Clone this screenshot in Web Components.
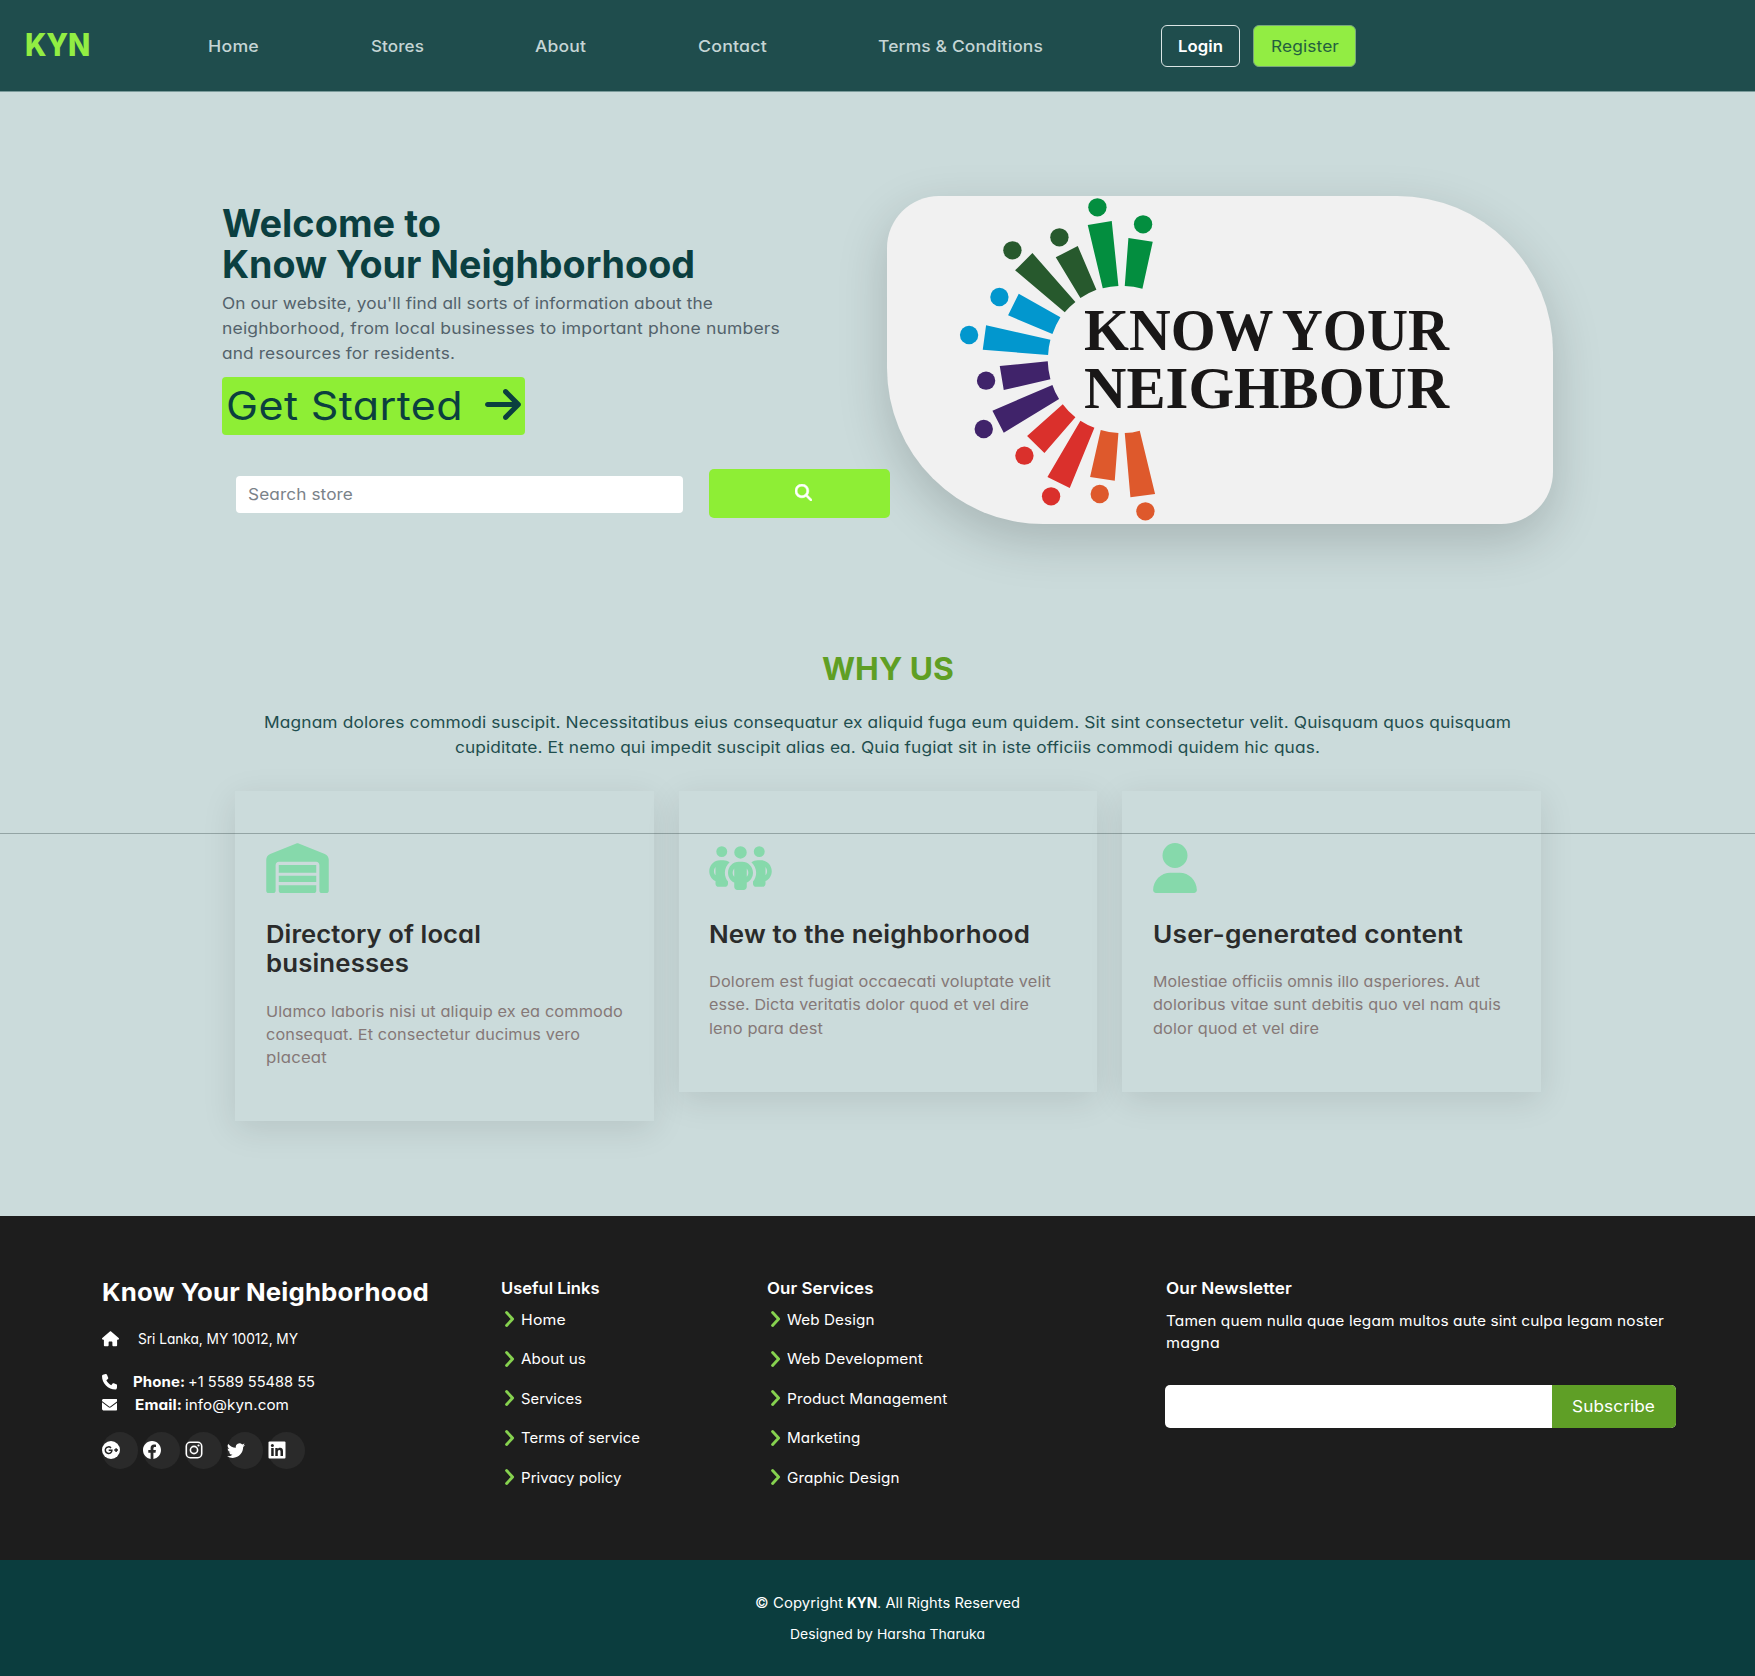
<!DOCTYPE html>
<html lang="en">
<head>
<meta charset="utf-8">
<title>Know Your Neighborhood</title>
<style>
  body { margin: 0; background: #cbdbdb; font-family: Inter, "Open Sans", sans-serif; font-feature-settings: "cv11"; }
</style>
</head>
<body>
<kyn-page></kyn-page>
<script>
const define = (name, html, init) => {
  const tpl = document.createElement('template');
  tpl.innerHTML = html;
  customElements.define(name, class extends HTMLElement {
    connectedCallback() {
      if (this.shadowRoot) return;
      this.attachShadow({ mode: 'open' }).append(document.importNode(tpl.content, true));
      if (init) init.call(this, this.shadowRoot);
    }
  });
};

define('text-line', `<style>
  :host { display: block; white-space: nowrap; flex: none; }
  span { display: inline-block; transform-origin: 0 50%; }
</style><span><slot></slot></span>`, function (root) {
  const w = parseFloat(this.getAttribute('w'));
  const span = root.querySelector('span');
  if (!w) return;
  const natural = span.getBoundingClientRect().width;
  const tracked = natural + (w - natural) * 0.15;
  span.style.letterSpacing = ((tracked - natural) / this.textContent.length).toFixed(4) + 'px';
  span.style.transform = 'scaleX(' + (w / tracked).toFixed(5) + ')';
  this.style.width = w + 'px';
});

const ICONS = {
  warehouse: ['0 0 640 512', '<path d="M0 488V171.3c0-26.2 15.9-49.7 40.2-59.4L308.1 4.8c7.6-3.1 16.1-3.1 23.8 0L599.8 111.9c24.3 9.7 40.2 33.3 40.2 59.4V488c0 13.3-10.7 24-24 24H568c-13.3 0-24-10.7-24-24V224c0-17.7-14.3-32-32-32H128c-17.7 0-32 14.3-32 32V488c0 13.3-10.7 24-24 24H24c-13.3 0-24-10.7-24-24zm488 24l-336 0c-13.3 0-24-10.7-24-24V432H512l0 56c0 13.3-10.7 24-24 24zM128 400V336H512v64H128zm0-96V224H512l0 80H128z"/>'],
  people: ['0 0 640 512', '<path d="M72 88a56 56 0 1 1 112 0A56 56 0 1 1 72 88zM64 245.7C54 256.9 48 271.8 48 288s6 31.1 16 42.3V245.7zm144.4-49.3C178.7 222.7 160 261.2 160 304c0 34.3 12 65.8 32 90.5V416c0 17.7-14.3 32-32 32H96c-17.7 0-32-14.3-32-32V389.2C26.2 371.2 0 332.7 0 288c0-61.9 50.1-112 112-112h32c24 0 46.2 7.5 64.4 20.3zM448 416V394.5c20-24.7 32-56.2 32-90.5c0-42.8-18.7-81.3-48.4-107.7C449.8 183.5 472 176 496 176h32c61.9 0 112 50.1 112 112c0 44.7-26.2 83.2-64 101.2V416c0 17.7-14.3 32-32 32H480c-17.7 0-32-14.3-32-32zm8-328a56 56 0 1 1 112 0A56 56 0 1 1 456 88zM576 245.7v84.7c10-11.3 16-26.1 16-42.3s-6-31.1-16-42.3zM320 32a64 64 0 1 1 0 128 64 64 0 1 1 0-128zM240 304c0 16.2 6 31 16 42.3V261.7c-10 11.3-16 26.1-16 42.3zm144-42.3v84.7c10-11.3 16-26.1 16-42.3s-6-31.1-16-42.3zM448 304c0 44.7-26.2 83.2-64 101.2V448c0 17.7-14.3 32-32 32H288c-17.7 0-32-14.3-32-32V405.2c-37.8-18-64-56.5-64-101.2c0-61.9 50.1-112 112-112h32c61.9 0 112 50.1 112 112z"/>'],
  user: ['0 0 448 512', '<path d="M224 256A128 128 0 1 0 224 0a128 128 0 1 0 0 256zm-45.7 48C79.8 304 0 383.8 0 482.3C0 498.7 13.3 512 29.7 512H418.3c16.4 0 29.7-13.3 29.7-29.7C448 383.8 368.2 304 269.7 304H178.3z"/>'],
  arrow: ['0 0 448 512', '<path d="M438.6 278.6c12.5-12.5 12.5-32.8 0-45.3l-160-160c-12.5-12.5-32.8-12.5-45.3 0s-12.5 32.8 0 45.3L338.8 224 32 224c-17.7 0-32 14.3-32 32s14.3 32 32 32l306.7 0L233.4 393.4c-12.5 12.5-12.5 32.8 0 45.3s32.8 12.5 45.3 0l160-160z"/>'],
  search: ['0 0 512 512', '<path stroke="currentColor" stroke-width="16" d="M416 208c0 45.9-14.9 88.3-40 122.7L502.6 457.4c12.5 12.5 12.5 32.8 0 45.3s-32.8 12.5-45.3 0L330.7 376c-34.4 25.2-76.8 40-122.7 40C93.1 416 0 322.9 0 208S93.1 0 208 0S416 93.1 416 208zM208 352a144 144 0 1 0 0-288 144 144 0 1 0 0 288z"/>'],
  house: ['0 0 576 512', '<path d="M575.8 255.5c0 18-15 32.1-32 32.1h-32l.7 160.2c0 2.7-.2 5.4-.5 8.1V472c0 22.1-17.9 40-40 40H456c-1.1 0-2.2 0-3.3-.1c-1.4 .1-2.8 .1-4.2 .1H416 392c-22.1 0-40-17.9-40-40V448 384c0-17.7-14.3-32-32-32H256c-17.7 0-32 14.3-32 32v64 24c0 22.1-17.9 40-40 40H160 128.1c-1.5 0-3-.1-4.5-.2c-1.2 .1-2.4 .2-3.6 .2H104c-22.1 0-40-17.9-40-40V360c0-.9 0-1.9 .1-2.8V287.6H32c-18 0-32-14-32-32.1c0-9 3-17 10-24L266.4 8c7-7 15-8 22-8s15 2 21 7L564.8 231.5c8 7 12 15 11 24z"/>'],
  phone: ['0 0 512 512', '<path d="M164.9 24.6c-7.7-18.6-28-28.5-47.4-23.2l-88 24C12.1 30.2 0 46 0 64C0 311.4 200.6 512 448 512c18 0 33.8-12.1 38.6-29.5l24-88c5.3-19.4-4.6-39.7-23.2-47.4l-96-40c-16.3-6.8-35.2-2.1-46.3 11.6L304.7 368C234.3 334.7 177.3 277.7 144 207.3L193.3 167c13.7-11.2 18.4-30 11.6-46.3l-40-96z"/>'],
  mail: ['0 0 512 512', '<path d="M48 64C21.5 64 0 85.5 0 112c0 15.1 7.1 29.3 19.2 38.4L236.8 313.6c11.4 8.5 27 8.5 38.4 0L492.8 150.4c12.1-9.1 19.2-23.3 19.2-38.4c0-26.5-21.5-48-48-48H48zM0 176V384c0 35.3 28.7 64 64 64H448c35.3 0 64-28.7 64-64V176L294.4 339.2c-22.8 17.1-54 17.1-76.8 0L0 176z"/>'],
  chevron: ['0 0 10 16', '<path d="M1.600 1.600 7.600 8l-6 6.400" fill="none" stroke="currentColor" stroke-width="2.900" stroke-linecap="round" stroke-linejoin="round"/>'],
  google: ['0 0 18 18', '<circle cx="9" cy="9" r="9"/><g fill="none" stroke="#222" stroke-width="1.500"><path d="M9 6.900A3.300 3.300 0 1 0 9.900 9.200H6.700M14.100 7.200v3.800M12.200 9.100H16"/></g>'],
  facebook: ['0 0 16 16', '<path d="M16 8.049c0-4.446-3.582-8.05-8-8.05C3.58 0-.002 3.603-.002 8.05c0 4.017 2.926 7.347 6.75 7.951v-5.625h-2.03V8.05H6.75V6.275c0-2.017 1.195-3.131 3.022-3.131.876 0 1.791.157 1.791.157v1.98h-1.009c-.993 0-1.303.621-1.303 1.258v1.51h2.218l-.354 2.326H9.25V16c3.824-.604 6.75-3.934 6.75-7.951z"/>'],
  instagram: ['0 0 18 18', '<g fill="none" stroke="currentColor" stroke-width="1.600"><rect x="1.300" y="1.300" width="15.400" height="15.400" rx="4"/><circle cx="9" cy="9" r="3.600"/></g><circle cx="13.500" cy="4.500" r="1.100"/>'],
  twitter: ['0 0 16 16', '<path d="M5.026 15c6.038 0 9.341-5.003 9.341-9.334 0-.14 0-.282-.006-.422A6.685 6.685 0 0 0 16 3.542a6.658 6.658 0 0 1-1.889.518 3.301 3.301 0 0 0 1.447-1.817 6.533 6.533 0 0 1-2.087.793A3.286 3.286 0 0 0 7.875 6.03a9.325 9.325 0 0 1-6.767-3.429 3.289 3.289 0 0 0 1.018 4.382A3.323 3.323 0 0 1 .64 6.575v.045a3.288 3.288 0 0 0 2.632 3.218 3.203 3.203 0 0 1-.865.115 3.23 3.23 0 0 1-.614-.057 3.283 3.283 0 0 0 3.067 2.277A6.588 6.588 0 0 1 .78 13.58a6.32 6.32 0 0 1-.78-.045A9.344 9.344 0 0 0 5.026 15z"/>'],
  linkedin: ['0 0 18 18', '<rect x=".5" y=".5" width="17" height="17" rx="1"/><g fill="#222"><circle cx="4.400" cy="4.500" r="1.500"/><path d="M3.200 7h2.500v8H3.200zM7.300 7h2.400v1.100c.5-.8 1.300-1.300 2.400-1.300 2.200 0 2.900 1.400 2.900 3.500V15h-2.500v-4.200c0-1.100-.2-1.900-1.200-1.900s-1.500.8-1.500 1.900V15H7.300z"/></g>']
};
define('kyn-icon', `<style>:host { display: block; flex: none; } svg { display: block; width: 100%; height: 100%; fill: currentColor; }</style>`, function (root) {
  const [box, body] = ICONS[this.getAttribute('name')];
  root.innerHTML += `<svg viewBox="${box}">${body}</svg>`;
});

define('kyn-nav', `<style>
  :host { display: flex; align-items: center; box-sizing: border-box; height: 92px; padding-left: 25px;
    background: #1f4d4d; border-bottom: 1px solid #7b9b9b; color: #c5d5d5; font-size: 16px; font-weight: 500; line-height: 24px; }
  nav { display: flex; gap: 111.500px; margin: 0 0 0 118px; }
  .brand { font-size: 31px; font-weight: 800; color: #92ed43; line-height: 38px; margin-top: -2px; }
  .btn { display: flex; align-items: center; justify-content: center; box-sizing: border-box; height: 42px; border-radius: 6px; }
  .login { width: 79px; margin-left: 118px; border: 1px solid #dbe5e5; color: #fff; font-weight: 600; }
  .register { width: 103px; margin-left: 13px; background: #92ed43; border: 1px solid #79a77d; color: #23603f; font-weight: 400; }
</style>
<text-line class="brand" w="65">KYN</text-line>
<nav><text-line w="51">Home</text-line><text-line w="53">Stores</text-line><text-line w="51">About</text-line><text-line w="69">Contact</text-line><text-line w="165">Terms &amp; Conditions</text-line></nav>
<div class="btn login"><text-line w="45">Login</text-line></div>
<div class="btn register"><text-line w="68">Register</text-line></div>`);

define('kyn-logo', `<style>
  :host { display: block; width: 665.5px; height: 328px; background: #f1f1f1; border-radius: 52px 156px 52px 156px; box-shadow: 0 17px 50px rgba(0,0,0,.175); }
  svg { display: block; width: 100%; height: 100%; }
  text { font-family: "Liberation Serif", serif; font-weight: bold; font-size: 177px; fill: #191717; }
</style>
<svg viewBox="51 48 1996 984">
  <g fill="#038e3f"><circle cx="682" cy="82" r="27.500"/><circle cx="819" cy="133" r="27.500"/><path d="M653 135l72-12 20 195q-24 1-47 7zM775 174l73 11-31 141q-26-7-53-8z"/></g>
  <g fill="#27592d"><circle cx="427" cy="211" r="27.500"/><circle cx="568" cy="172" r="27.500"/><path d="M435 271l52-52 129 147q-18 14-32 31zM557 232l66-34 56 131q-25 9-48 25z"/></g>
  <g fill="#0297ce"><circle cx="388" cy="351" r="27.500"/><circle cx="297" cy="465" r="27.500"/><path d="M446 341l125 71q-15 24-24 50l-133-56zM348 436l193 43q-6 22-7 46l-196-16z"/></g>
  <g fill="#40236a"><circle cx="348" cy="602" r="27.500"/><circle cx="341" cy="747" r="27.500"/><path d="M389 558l144-14q1 28 8 54l-140 32zM367 692l180-77q7 22 20 42L401 758z"/></g>
  <g fill="#da302c"><circle cx="463" cy="827" r="27.500"/><circle cx="543" cy="949" r="27.500"/><path d="M578 673q16 22 38 39l-93 107-52-51zM631 722q20 13 42 21l-74 181-67-33z"/></g>
  <g fill="#de592c"><circle cx="689" cy="942" r="27.500"/><circle cx="826" cy="994" r="27.500"/><path d="M692 750q25 8 53 9l-11 143-74-11zM764 759q23 0 45-7l46 190-74 10z"/></g>
  <text x="642" y="510" textLength="568" lengthAdjust="spacingAndGlyphs">KNOW</text>
  <text x="1235" y="510" textLength="502" lengthAdjust="spacingAndGlyphs">YOUR</text>
  <text x="642" y="684" textLength="1095" lengthAdjust="spacingAndGlyphs">NEIGHBOUR</text>
</svg>`);

define('kyn-hero', `<style>
  :host { display: grid; grid-template-columns: 665px 665.5px; padding: 104px 0 0 222px; }
  .copy { padding-top: 7px; position: relative; z-index: 1; }
  h1 { margin: 0; font-size: 37.6px; font-weight: 750; line-height: 41.4px; color: #0b3f40; font-feature-settings: normal; }
  .lead { margin-top: 5px; font-size: 16px; line-height: 25px; color: #53626b; }
  .start { display: flex; align-items: center; gap: 22px; box-sizing: border-box; width: 303px; height: 58.300px; margin-top: 10.900px; padding-left: 4px; border-radius: 4px; background: #8eee35; color: #0b3f3f; font-size: 39px; line-height: 50px; font-weight: 400; }
  .start kyn-icon { width: 36px; height: 41px; margin-top: -2px; }
  form { display: flex; align-items: center; gap: 25.500px; width: max-content; margin: 33.500px 0 0 13.500px; }
  .field { display: flex; align-items: center; box-sizing: border-box; flex: none; width: 447.500px; height: 37px; margin-top: 2px; padding-left: 12px; border-radius: 4px; background: #fff; color: #7a8289; font-size: 16px; }
  .go { display: flex; align-items: center; justify-content: center; width: 181.500px; height: 49.400px; border-radius: 5px; background: #8eee35; color: #fff; flex: none; }
  .go kyn-icon { width: 17px; height: 17px; margin: -1px 0 0 9px; }
</style>
<div class="copy">
  <h1><text-line w="219">Welcome to</text-line><text-line w="473">Know Your Neighborhood</text-line></h1>
  <div class="lead"><text-line w="491">On our website, you'll find all sorts of information about the</text-line><text-line w="558">neighborhood, from local businesses to important phone numbers</text-line><text-line w="233">and resources for residents.</text-line></div>
  <div class="start"><text-line w="237">Get Started</text-line><kyn-icon name="arrow"></kyn-icon></div>
  <form><div class="field"><text-line w="105">Search store</text-line></div><div class="go"><kyn-icon name="search"></kyn-icon></div></form>
</div>
<kyn-logo></kyn-logo>`);

define('feature-card', `<style>
  :host { display: block; box-sizing: border-box; width: 418.500px; padding: 51.500px 30px 52px 30.500px; background: #cbdbdb; box-shadow: 0 8px 32px rgba(0,0,0,.1); }
  .pic { height: 50px; color: #86d9ab; display: flex; }
  .title { margin-top: 27px; font-size: 24.500px; font-weight: 600; line-height: 29.500px; color: #2a2b2b; }
  .text { margin-top: 21px; font-size: 15px; line-height: 23.300px; color: #857877; }
</style>
<div class="pic"><slot name="icon"></slot></div><div class="title"><slot name="title"></slot></div><div class="text"><slot></slot></div>`);

define('kyn-why', `<style>
  :host { display: block; padding-top: 125.500px; padding-left: 20px; text-align: center; }
  h2 { margin: 0; font-size: 31.500px; font-weight: 700; line-height: 38px; color: #5f9f24; }
  .sub { margin-top: 22px; font-size: 16px; line-height: 25.300px; color: #1f4e4e; }
  h2 text-line, .sub text-line { margin: 0 auto; text-align: left; }
  .cards { display: flex; align-items: flex-start; gap: 25.100px; margin: 31px 0 0 215px; text-align: left; }
  kyn-icon { height: 50px; width: 63px; }
  .narrow { width: 44px; }
</style>
<h2><text-line w="132">WHY US</text-line></h2>
<div class="sub"><text-line w="1247">Magnam dolores commodi suscipit. Necessitatibus eius consequatur ex aliquid fuga eum quidem. Sit sint consectetur velit. Quisquam quos quisquam</text-line><text-line w="865">cupiditate. Et nemo qui impedit suscipit alias ea. Quia fugiat sit in iste officiis commodi quidem hic quas.</text-line></div>
<div class="cards">
  <feature-card><kyn-icon slot="icon" name="warehouse"></kyn-icon><text-line slot="title" w="215">Directory of local</text-line><text-line slot="title" w="143">businesses</text-line><text-line w="357">Ulamco laboris nisi ut aliquip ex ea commodo</text-line><text-line w="314">consequat. Et consectetur ducimus vero</text-line><text-line w="61">placeat</text-line></feature-card>
  <feature-card><kyn-icon slot="icon" name="people"></kyn-icon><text-line slot="title" w="321">New to the neighborhood</text-line><text-line w="342">Dolorem est fugiat occaecati voluptate velit</text-line><text-line w="320">esse. Dicta veritatis dolor quod et vel dire</text-line><text-line w="114">leno para dest</text-line></feature-card>
  <feature-card><kyn-icon class="narrow" slot="icon" name="user"></kyn-icon><text-line slot="title" w="310">User-generated content</text-line><text-line w="327">Molestiae officiis omnis illo asperiores. Aut</text-line><text-line w="348">doloribus vitae sunt debitis quo vel nam quis</text-line><text-line w="166">dolor quod et vel dire</text-line></feature-card>
</div>`);

define('link-item', `<style>
  :host { display: flex; align-items: center; gap: 6px; height: 39.500px; padding-left: 4.500px; font-size: 14.300px; font-weight: 400; }
  kyn-icon { width: 10px; height: 16px; color: #86d24f; }
</style><kyn-icon name="chevron"></kyn-icon><slot></slot>`);

define('kyn-footer', `<style>
  :host { display: block; color: #fff; }
  .top { box-sizing: border-box; height: 344px; display: grid; grid-template-columns: 399px 266px 399px 1fr; padding: 61px 0 0 101.500px; background: #1d1d1d; }
  h3 { margin: 0; font-size: 24.500px; line-height: 30px; font-weight: 750; }
  h4 { margin: .5px 0 2px; font-size: 16.300px; line-height: 20px; font-weight: 600; }
  .row { display: flex; align-items: center; height: 22.600px; font-size: 14.300px; }
  .row kyn-icon { width: 15.500px; height: 15.500px; }
  b { font-weight: 700; }
  .social { display: flex; gap: 5px; margin-top: 16.300px; }
  .social div { display: flex; align-items: center; width: 36.700px; height: 37px; border-radius: 50%; background: #2a2a2a; }
  .social kyn-icon { width: 18px; height: 18px; margin-top: -1px; }
  .news { margin-top: 12.500px; font-size: 14.400px; line-height: 22.300px; }
  .form { display: flex; width: 510.500px; height: 43px; margin: 30px 0 0 -.5px; border-radius: 5px; overflow: hidden; background: #fff; justify-content: flex-end; }
  .sub { display: flex; align-items: center; justify-content: center; width: 123.500px; background: #5f9f26; font-size: 16.300px; }
  .bottom { box-sizing: border-box; height: 116px; padding: 33px 0 0 20px; background: #0b3d3e; }
  .copy { display: flex; justify-content: center; gap: 4px; font-size: 14px; line-height: 20px; }
  .copy + .copy { margin-top: 11px; font-size: 13.300px; }
</style>
<div class="top">
  <div>
    <h3><text-line w="327">Know Your Neighborhood</text-line></h3>
    <div class="row" style="margin-top:20.5px"><kyn-icon name="house" style="width:17px"></kyn-icon><text-line w="160" style="margin-left:19.500px">Sri Lanka, MY 10012, MY</text-line></div>
    <div class="row" style="margin-top:20.4px"><kyn-icon name="phone"></kyn-icon><text-line w="52" style="margin-left:15.500px"><b>Phone:</b></text-line><text-line w="127" style="margin-left:3px">+1 5589 55488 55</text-line></div>
    <div class="row"><kyn-icon name="mail"></kyn-icon><text-line w="47" style="margin-left:18px"><b>Email:</b></text-line><text-line w="104" style="margin-left:3px">info@kyn.com</text-line></div>
    <div class="social"><div><kyn-icon name="google"></kyn-icon></div><div><kyn-icon name="facebook"></kyn-icon></div><div><kyn-icon name="instagram"></kyn-icon></div><div><kyn-icon name="twitter"></kyn-icon></div><div><kyn-icon name="linkedin"></kyn-icon></div></div>
  </div>
  <div>
    <h4><text-line w="98.500">Useful Links</text-line></h4>
    <link-item><text-line w="45">Home</text-line></link-item><link-item><text-line w="65">About us</text-line></link-item><link-item><text-line w="61">Services</text-line></link-item><link-item><text-line w="119">Terms of service</text-line></link-item><link-item><text-line w="100.500">Privacy policy</text-line></link-item>
  </div>
  <div>
    <h4><text-line w="106.500">Our Services</text-line></h4>
    <link-item><text-line w="87.500">Web Design</text-line></link-item><link-item><text-line w="136">Web Development</text-line></link-item><link-item><text-line w="160.500">Product Management</text-line></link-item><link-item><text-line w="73.500">Marketing</text-line></link-item><link-item><text-line w="112.500">Graphic Design</text-line></link-item>
  </div>
  <div>
    <h4><text-line w="126">Our Newsletter</text-line></h4>
    <div class="news"><text-line w="498">Tamen quem nulla quae legam multos aute sint culpa legam noster</text-line><text-line w="54">magna</text-line></div>
    <div class="form"><div class="sub"><text-line w="83">Subscribe</text-line></div></div>
  </div>
</div>
<div class="bottom">
  <div class="copy"><text-line w="88">© Copyright</text-line><text-line w="30"><b>KYN</b></text-line><text-line w="143" style="margin-left:-4px">. All Rights Reserved</text-line></div>
  <div class="copy"><text-line w="195">Designed by Harsha Tharuka</text-line></div>
</div>`);

define('kyn-page', `<style>
  :host { display: block; position: relative; width: 1755px; height: 1676px; overflow: hidden; }
  main { height: 1124px; }
  .rule { position: absolute; left: 0; right: 0; top: 833px; height: 1px; background: rgba(30,50,50,.32); }
</style>
<kyn-nav></kyn-nav>
<main><kyn-hero></kyn-hero><kyn-why></kyn-why></main>
<kyn-footer></kyn-footer>
<div class="rule"></div>`);
</script>
</body>
</html>
